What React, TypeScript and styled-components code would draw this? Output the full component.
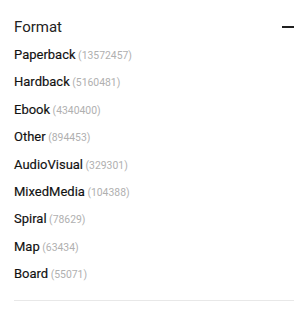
import React from "react";
import styled, { createGlobalStyle } from "styled-components";

const Global = createGlobalStyle`
  html, body { margin: 0; padding: 0; background: #fff; }
  body { font-family: Roboto, "Liberation Sans", Arial, sans-serif; }
`;

const Panel = styled.section`
  width: 308px;
  box-sizing: border-box;
  padding: 16.5px 14px 0 14px;
`;

const Header = styled.div`
  display: flex;
  align-items: center;
  justify-content: space-between;
  height: 20px;
`;

const Title = styled.h3`
  margin: 0;
  font-size: 15px;
  line-height: 20px;
  font-weight: 400;
  color: #222;
`;

const Toggle = styled.button`
  border: 0;
  padding: 0;
  background: transparent;
  width: 12px;
  height: 20px;
  display: flex;
  align-items: center;
  cursor: pointer;
`;

const Bar = styled.span`
  display: block;
  width: 12px;
  height: 2px;
  background: #1f1f1f;
`;

const List = styled.ul`
  list-style: none;
  margin: 4.5px 0 0 0;
  padding: 0;
`;

const Item = styled.li`
  height: 27.4px;
  line-height: 27.4px;
  font-size: 13px;
  font-weight: 400;
  color: #111;
  -webkit-text-stroke: 0.15px #111;
  white-space: nowrap;
`;

const Count = styled.span`
  font-size: 10.4px;
  font-weight: 400;
  color: #b0b0b0;
  -webkit-text-stroke: 0;
  margin-left: 2.5px;
`;

const Divider = styled.hr`
  border: 0;
  border-top: 1px solid #e8e8e8;
  margin: 12px 0 0 0;
`;

const formats: [string, number][] = [
  ["Paperback", 13572457],
  ["Hardback", 5160481],
  ["Ebook", 4340400],
  ["Other", 894453],
  ["AudioVisual", 329301],
  ["MixedMedia", 104388],
  ["Spiral", 78629],
  ["Map", 63434],
  ["Board", 55071],
];

export default function App() {
  return (
    <>
      <Global />
      <Panel>
        <Header>
          <Title>Format</Title>
          <Toggle aria-label="Collapse">
            <Bar />
          </Toggle>
        </Header>
        <List>
          {formats.map(([name, n]) => (
            <Item key={name}>
              {name}
              <Count>({n})</Count>
            </Item>
          ))}
        </List>
        <Divider />
      </Panel>
    </>
  );
}
